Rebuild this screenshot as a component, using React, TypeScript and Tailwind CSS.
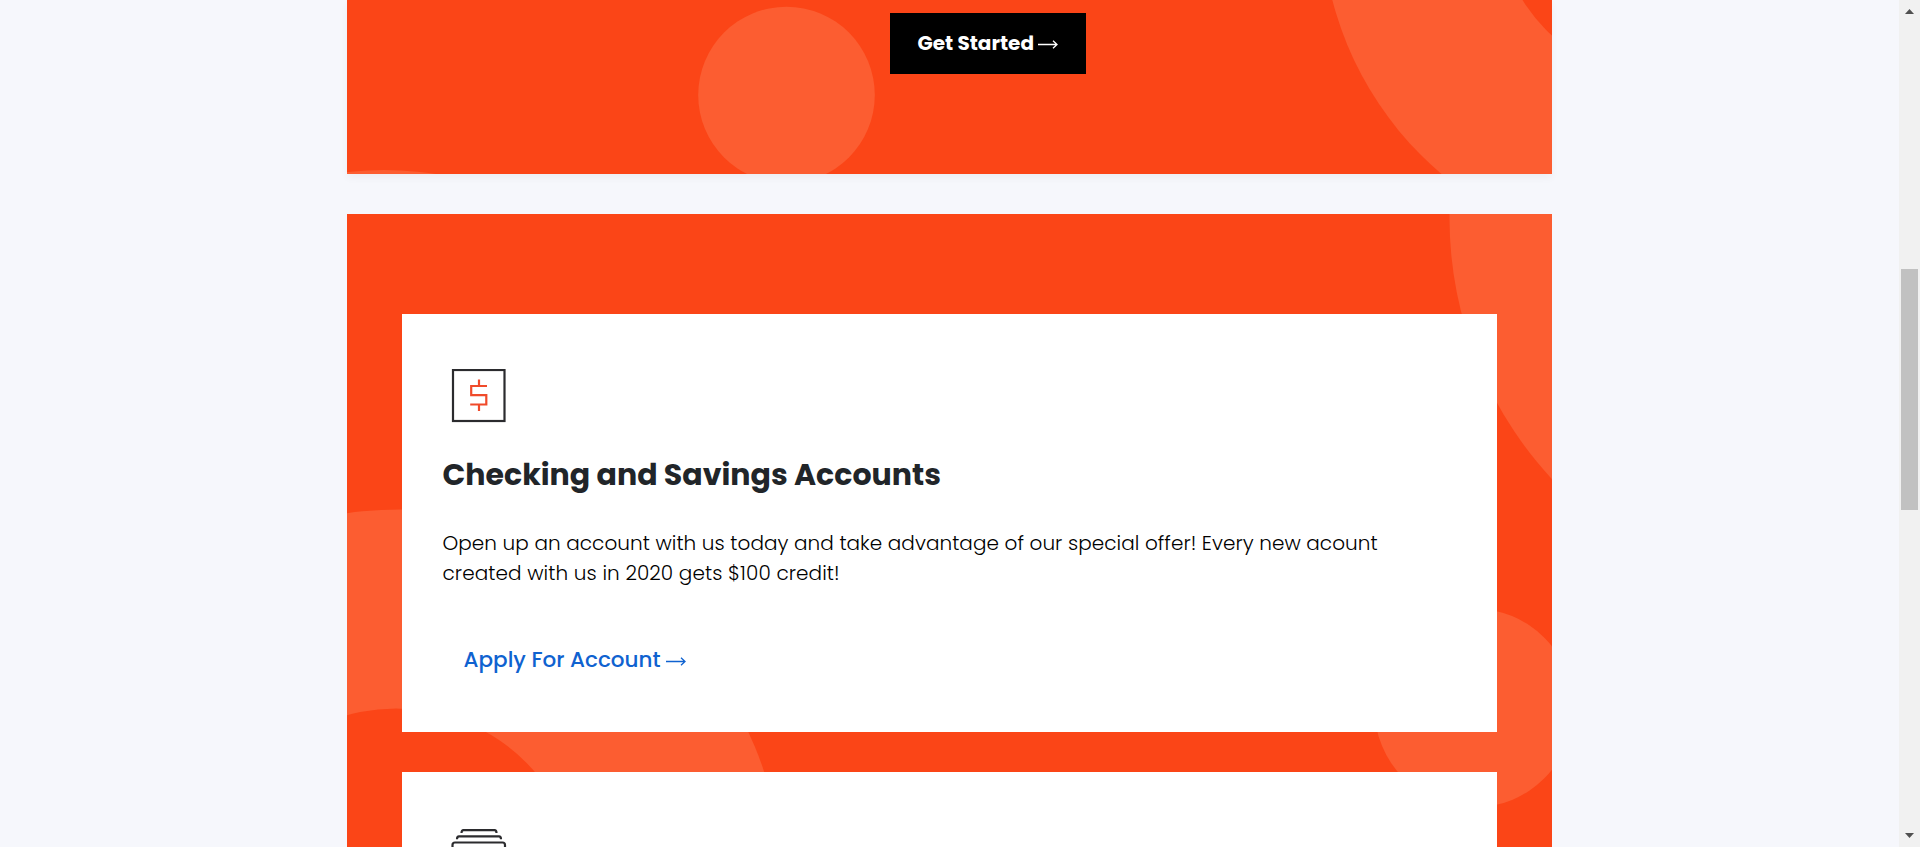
import React from "react";

function HeroPattern() {
  return (
    <svg className="absolute inset-0" width="1205" height="174" viewBox="347 0 1205 174" fill="#fc5d31" aria-hidden="true">
      <circle cx="786.5" cy="95" r="88.3" />
      <circle cx="1661" cy="-85" r="339.5" />
      <circle cx="1661" cy="-85" r="162.5" fill="#fb4517" />
      <circle cx="384" cy="510" r="340" />
    </svg>
  );
}

function ServicesPattern() {
  return (
    <svg className="absolute inset-0" width="1205" height="633" viewBox="347 214 1205 633" fill="#fc5d31" aria-hidden="true">
      <circle cx="1833.5" cy="218" r="384" />
      <circle cx="1474" cy="708" r="99.5" />
      <circle cx="400" cy="893.5" r="384" />
      <circle cx="396" cy="892.500" r="184" fill="#fb4517" />
    </svg>
  );
}

function DollarIcon() {
  return (
    <svg width="56" height="54" viewBox="0 0 56 54" fill="none" strokeWidth="2.200" aria-hidden="true">
      <rect x="2" y="1" width="51.500" height="51" stroke="#2b2b2e" />
      <path d="M28 10.500v6.500M36 17H20.200V26.200H35.300V35.500H19.200M28 35.500v6.500" stroke="#f04a2a" />
    </svg>
  );
}

function CardsIcon() {
  return (
    <svg width="56" height="54" viewBox="0 0 56 54" fill="none" stroke="#2b2b2e" strokeWidth="2.200" aria-hidden="true">
      <path d="M10.500 5c0-2 .6-2.800 2-2.800h31c1.400 0 2 .8 2 2.800" />
      <path d="M6 11.200c0-2 .6-2.800 2-2.800h40c1.400 0 2 .8 2 2.800" />
      <path d="M1.500 19v-2q0-2.500 2.500-2.500h47.500q2.500 0 2.500 2.500V52H1.500z" />
    </svg>
  );
}

function Arrow({ className }: { className: string }) {
  return (
    <svg className={className} width="20" height="9" viewBox="0 0 20 9" fill="none" stroke="currentColor" strokeWidth="1.300" aria-hidden="true">
      <path d="M0 4.500H19M15 .8L19 4.500L15 8.200" />
    </svg>
  );
}

function Scrollbar() {
  return (
    <div className="flex w-[21px] flex-col items-center justify-between bg-[#f1f1f1] pt-[9px] pb-[9px] pr-px">
      <svg width="9" height="5" viewBox="0 0 9 5" fill="#505050"><path d="M4.500 0L9 5H0z" /></svg>
      <div className="mt-[5px] h-[241px] w-[17px] bg-[#c1c1c1]" />
      <svg className="mt-[73px]" width="9" height="5" viewBox="0 0 9 5" fill="#505050"><path d="M4.500 5L0 0h9z" /></svg>
    </div>
  );
}

export default function App() {
  return (
    <div className="flex h-[847px] w-full overflow-hidden bg-[#f6f7fc] font-['Poppins','Inter',sans-serif]">
      <main className="flex flex-1 flex-col items-center gap-10">
        <section className="relative flex h-[174px] w-[1205px] shrink-0 items-start bg-[#fb4517] pt-[13px] pl-[543px] shadow-[0_4px_8px_rgba(0,0,0,0.04)]">
          <HeroPattern />
          <a className="relative flex h-[61px] w-[196px] items-center bg-black pb-[2px] pl-[27.5px] text-[20px] font-bold whitespace-nowrap text-white">
            <span>Get Started</span>
            <Arrow className="mt-[4px] ml-[4px]" />
          </a>
        </section>
        <section className="relative flex h-[633px] w-[1205px] shrink-0 flex-col gap-10 overflow-hidden bg-[#fb4517] px-[55px] pt-[100px]">
          <ServicesPattern />
          <article className="relative flex h-[418px] shrink-0 flex-col items-start bg-white pl-[40.5px] pt-[55px]">
            <div className="ml-[8px]"><DollarIcon /></div>
            <h2 className="mt-[28px] text-[30px] leading-[48px] font-bold whitespace-nowrap text-[#212529]">
              Checking and Savings Accounts
            </h2>
            <p className="mt-[29px] text-[20px] leading-[30px] font-light whitespace-nowrap text-black">
              <span className="tracking-[0.055px]">Open up an account with us today and take advantage of our special offer! Every new acount</span>
              <br />
              <span className="tracking-[0.09px]">created with us in 2020 gets $100 credit!</span>
            </p>
            <a className="mt-[56px] ml-[21px] flex items-center text-[21.5px] leading-[32px] font-medium whitespace-nowrap text-[#0f62d0]">
              <span>Apply For Account</span>
              <Arrow className="mt-[3px] ml-[6px]" />
            </a>
          </article>
          <article className="relative h-[418px] shrink-0 bg-white pl-10 pt-[56px]">
            <div className="ml-[9px]"><CardsIcon /></div>
          </article>
        </section>
      </main>
      <Scrollbar />
    </div>
  );
}
